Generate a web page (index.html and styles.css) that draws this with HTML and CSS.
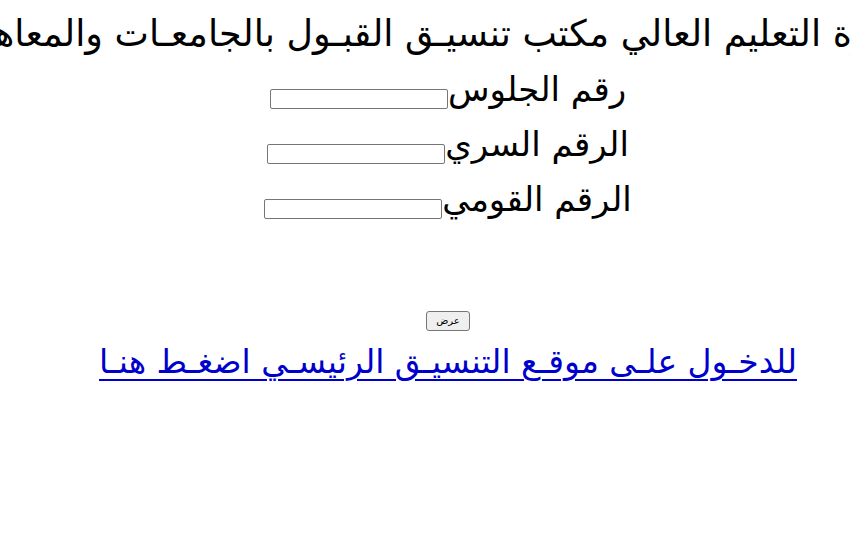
FILE: index.html
```html
<!DOCTYPE html>
<html lang="ar" dir="rtl">
<head>
<meta charset="utf-8">
<link rel="stylesheet" href="styles.css">
</head>
<body>
<div class="page">
  <div class="title">وزارة التعليم العالي مكتب تنسيـق القبـول بالجامعـات والمعاهـد</div>
  <div class="row"><span class="label">رقم الجلوس</span><input class="field" type="text"></div>
  <div class="row"><span class="label">الرقم السري</span><input class="field" type="text"></div>
  <div class="row"><span class="label">الرقم القومي</span><input class="field" type="text"></div>
  <div class="actions"><button class="btn" type="button">عرض</button></div>
  <div class="linkrow"><a class="link" href="#">للدخـول علـى موقـع التنسيـق الرئيسـي اضغـط هنـا</a></div>
</div>
</body>
</html>
```

FILE: styles.css
```css
html, body {
  margin: 0;
  padding: 0;
  background: #fff;
  overflow: hidden;
}
body {
  font-family: "DejaVu Sans", "Noto Sans", sans-serif;
  color: #000;
}
.page {
  width: 850px;
  overflow: hidden;
  display: flex;
  flex-direction: column;
  align-items: center;
  text-align: center;
}
.title {
  white-space: nowrap;
  font-size: 36.5px;
  line-height: 40px;
  margin-top: 14px;
  padding-left: 30px;
}
.row {
  display: flex;
  align-items: flex-end;
  justify-content: center;
  height: 55px;
  padding-left: 46px;
}
.label {
  font-size: 34px;
  line-height: 40px;
}
.field {
  width: 172px;
  height: 16px;
  border: 1px solid #767676;
  border-radius: 2px;
  padding: 1px 2px;
  margin: 0 0 0 0;
}
.actions {
  margin-top: 90px;
  padding-left: 46px;
}
.btn {
  font-family: "DejaVu Sans", sans-serif;
  font-size: 10px;
  height: 20px;
  width: 44px;
  padding: 0;
  background: #efefef;
  border: 1px solid #767676;
  border-radius: 3px;
}
.linkrow {
  margin-top: 6px;
  padding-left: 46px;
}
.link {
  color: #0000cc;
  font-size: 33px;
  line-height: 50px;
  white-space: nowrap;
  text-underline-offset: 6px;
  text-decoration-thickness: 2px;
}
```
